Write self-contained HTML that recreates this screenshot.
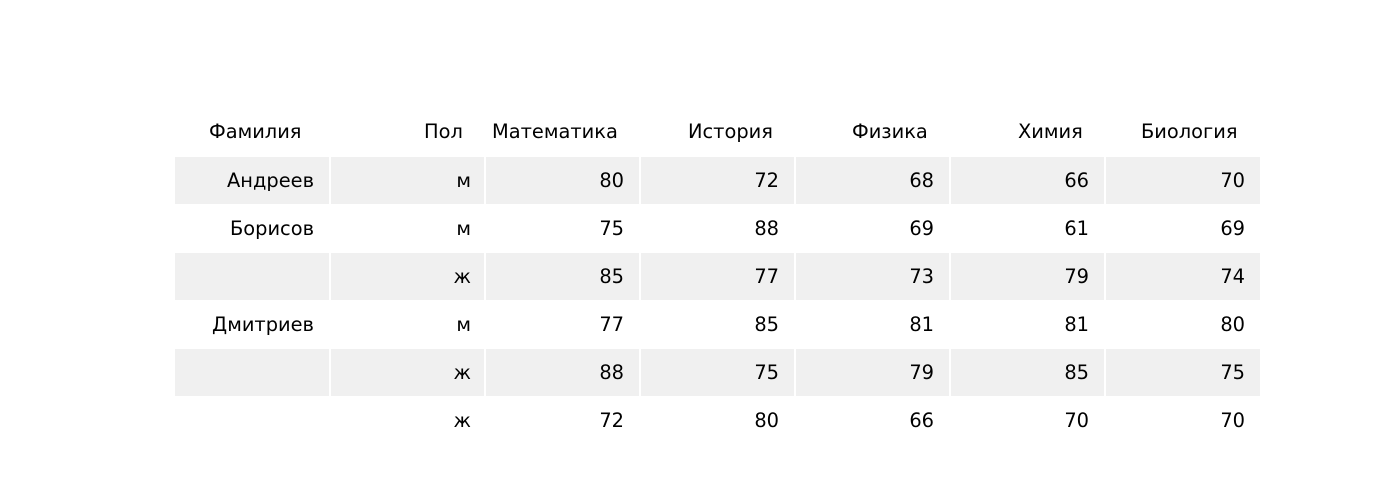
<!DOCTYPE html>
<html><head><meta charset="utf-8"><style>
body{margin:0;width:1400px;height:500px;background:#fff;position:relative;font-family:"DejaVu Sans","Liberation Sans",sans-serif;font-size:19.4px;color:#000;overflow:hidden}
.g{position:absolute;left:175px;width:1085px;height:47px;background:#f0f0f0}
.v{position:absolute;width:2px;height:47px;background:#fff}
.t{position:absolute;line-height:24px;white-space:nowrap}
.r{text-align:right;width:200px}
</style></head><body>
<div class="g" style="top:157px"></div>
<div class="g" style="top:253px"></div>
<div class="g" style="top:349px"></div>
<div class="t" style="left:209px;top:120px">Фамилия</div>
<div class="t" style="left:424px;top:120px">Пол</div>
<div class="t" style="left:492px;top:120px">Математика</div>
<div class="t" style="left:688px;top:120px">История</div>
<div class="t" style="left:852px;top:120px">Физика</div>
<div class="t" style="left:1018px;top:120px">Химия</div>
<div class="t" style="left:1141px;top:120px">Биология</div>
<div id="cells"></div>
<script>
var rows=[["Андреев","м","80","72","68","66","70"],["Борисов","м","75","88","69","61","69"],["","ж","85","77","73","79","74"],["Дмитриев","м","77","85","81","81","80"],["","ж","88","75","79","85","75"],["","ж","72","80","66","70","70"]];
var rights=[314,471,624,779,934,1089,1245];
var h="";
rows.forEach(function(r,i){var top=169+i*48;r.forEach(function(c,j){h+='<div class="t r" style="left:'+(rights[j]-200)+'px;top:'+top+'px">'+c+'</div>';});});
[0,2,4].forEach(function(i){[330,485,640,795,950,1105].forEach(function(x){h+='<div class="v" style="left:'+(x-1)+'px;top:'+(157+i*48)+'px"></div>';});});
document.getElementById("cells").innerHTML=h;
</script>
</body></html>
